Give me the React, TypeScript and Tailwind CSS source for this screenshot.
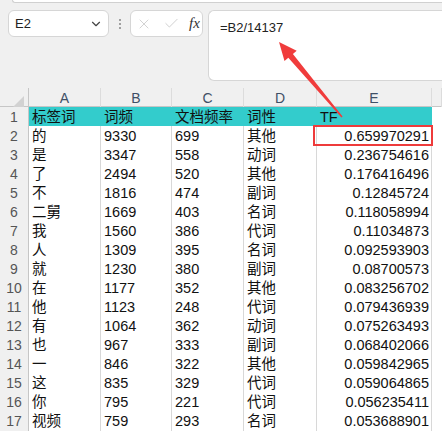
import { ChevronDown, X, Check } from 'lucide-react';

const rows: [string, string, string, string, string][] = [
  ['的', '9330', '699', '其他', '0.659970291'],
  ['是', '3347', '558', '动词', '0.236754616'],
  ['了', '2494', '520', '其他', '0.176416496'],
  ['不', '1816', '474', '副词', '0.12845724'],
  ['二舅', '1669', '403', '名词', '0.118058994'],
  ['我', '1560', '386', '代词', '0.11034873'],
  ['人', '1309', '395', '名词', '0.092593903'],
  ['就', '1230', '380', '副词', '0.08700573'],
  ['在', '1177', '352', '其他', '0.083256702'],
  ['他', '1123', '248', '代词', '0.079436939'],
  ['有', '1064', '362', '动词', '0.075263493'],
  ['也', '967', '333', '副词', '0.068402066'],
  ['一', '846', '322', '其他', '0.059842965'],
  ['这', '835', '329', '代词', '0.059064865'],
  ['你', '795', '221', '代词', '0.056235411'],
  ['视频', '759', '293', '名词', '0.053688901']
];

const font = { fontFamily: '"Liberation Sans", "Noto Sans CJK SC", sans-serif' };

function Toolbar() {
  return (
    <div className="h-[88px] bg-[#f0f0f0]">
      <div className="ml-[12px] h-[3px] bg-white border-b border-l border-[#d0d0d0] rounded-bl-md" />
      <div className="flex items-start mt-[7px]">
        <div className="ml-[8px] w-[101px] h-[27px] bg-white border border-[#d6d6d6] rounded-md flex items-center justify-between pl-[6px] pr-[5px]">
          <span className="text-[13px] text-[#222]">E2</span>
          <ChevronDown className="w-[14px] h-[14px] text-[#444]" strokeWidth={2} />
        </div>
        <div className="w-[21px] h-[27px] flex flex-col items-center justify-center gap-[2px]">
          <span className="w-[2px] h-[2px] bg-[#a0a0a0]" />
          <span className="w-[2px] h-[2px] bg-[#a0a0a0]" />
          <span className="w-[2px] h-[2px] bg-[#a0a0a0]" />
        </div>
        <div className="w-[73px] h-[27px] bg-white border border-[#d6d6d6] rounded-md flex items-center pl-[5px] gap-[3px]">
          <X className="w-[16px] h-[16px] text-[#c8c8c8]" strokeWidth={1.2} />
          <Check className="w-[17px] h-[17px] text-[#c8c8c8] ml-[8px]" strokeWidth={1.2} />
          <span
            className="ml-[6px] text-[15px] italic text-[#333]"
            style={{ fontFamily: '"Liberation Serif", serif' }}
          >
            fx
          </span>
        </div>
        <div className="ml-[5px] flex-1 h-[71px] bg-white border border-r-0 border-[#d6d6d6] rounded-l-md pl-[11px] pt-[4px]">
          <span className="text-[13px] text-[#222]">=B2/14137</span>
        </div>
      </div>
    </div>
  );
}

const cols = 'grid grid-cols-[29px_72px_71px_72px_73px_115px_1fr]';

function HeaderRow() {
  const letters = ['A', 'B', 'C', 'D', 'E', ''];
  return (
    <div className={`${cols} h-[19px] bg-[#f0f0f0] border-b border-[#c6c6c6]`}>
      <div className="relative border-r border-[#c6c6c6]">
        <div
          className="absolute right-[4px] bottom-[2px] w-[11px] h-[11px] bg-[#d2d2d2]"
          style={{ clipPath: 'polygon(100% 0, 100% 100%, 0 100%)' }}
        />
      </div>
      {letters.map((l, i) => (
        <div
          key={i}
          className="border-r border-[#dcdcdc] flex items-center justify-center text-[14px] text-[#3f4f66]"
        >
          {l}
        </div>
      ))}
    </div>
  );
}

function Row({ n, cells, head }: { n: number; cells: string[]; head?: boolean }) {
  return (
    <div className={`${cols} h-[19px]`}>
      <div className="bg-[#f0f0f0] border-r border-b border-[#c6c6c6] flex items-center justify-center text-[14px] text-[#555]">
        {n}
      </div>
      {cells.map((c, i) => (
        <div
          key={i}
          className={`border-b border-r flex items-center text-[14.5px] text-[#111] whitespace-nowrap overflow-visible ${
            head ? 'bg-[#33cccc] border-[#33cccc]' : 'bg-white border-[#d8d8d8]'
          } ${i === 4 && !head ? 'justify-end pr-[2px]' : 'pl-[3px]'}`}
        >
          {c}
        </div>
      ))}
      <div className="bg-white border-b border-[#d8d8d8]" />
    </div>
  );
}

export default function App() {
  return (
    <div className="relative w-[442px] h-[431px] overflow-hidden bg-white" style={font}>
      <Toolbar />
      <HeaderRow />
      <Row n={1} cells={['标签词', '词频', '文档频率', '词性', 'TF']} head />
      {rows.map((r, i) => (
        <Row key={i} n={i + 2} cells={r} />
      ))}

      {/* highlight box around E2 */}
      <div className="absolute left-[313px] top-[125px] w-[120px] h-[21px] border-2 border-[#ee3b3b]" />

      {/* arrow pointing to the formula */}
      <svg className="absolute left-0 top-0" width="442" height="431" viewBox="0 0 442 431">
        <polygon
          points="279,42 296.7,50.7 292.9,53.9 342.6,116.5 341.4,117.5 288.3,57.7 284.5,61"
          fill="#f03c3c"
        />
      </svg>
    </div>
  );
}
